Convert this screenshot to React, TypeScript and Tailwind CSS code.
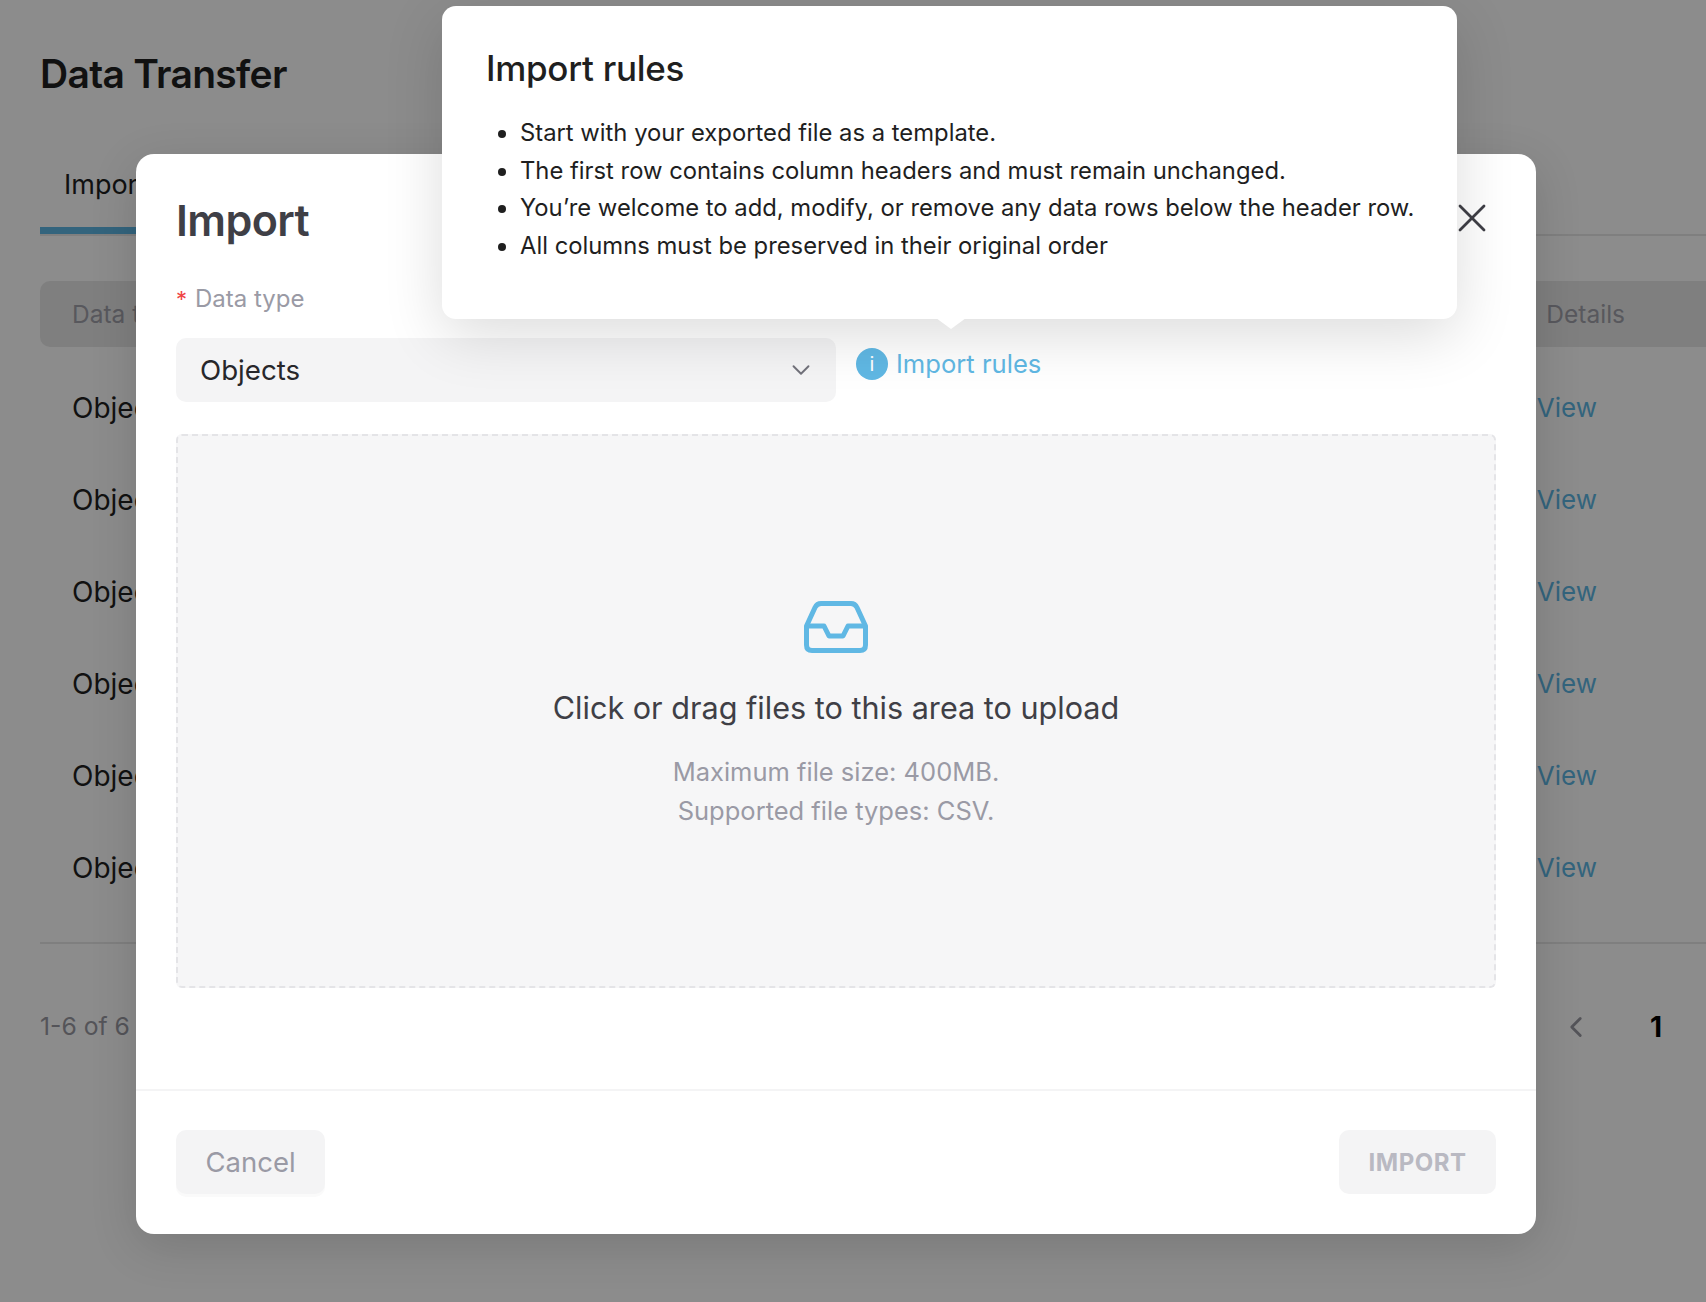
import { ChevronDown, ChevronLeft, X } from "lucide-react"

const rows = ["Objects", "Objects", "Objects", "Objects", "Objects", "Objects"]

const rules = [
  "Start with your exported file as a template.",
  "The first row contains column headers and must remain unchanged.",
  "You’re welcome to add, modify, or remove any data rows below the header row.",
  "All columns must be preserved in their original order",
]

const InboxIcon = () => (
  <svg width="64" height="52" viewBox="0 0 64 52" fill="none" stroke="#60b8e4" strokeWidth="5" strokeLinejoin="round">
    <path d="M2.5 25 L11 6.5 Q13 2.5 17 2.5 H47 Q51 2.5 53 6.5 L61.5 25 V44 Q61.5 49.5 56 49.5 H8 Q2.5 49.5 2.5 44 Z" />
    <path d="M2.5 25 H20 L25 35 H39 L44 25 H61.5" />
  </svg>
)

const Page = () => (
  <div className="pl-10 pt-[48px]">
    <h1 className="text-[39px] leading-[52px] font-semibold text-[#1f1f1f] tracking-[-0.7px]">Data Transfer</h1>
    <div className="mt-[50px] h-[86px] border-b-2 border-[#e8e8e8] flex">
      <div className="w-[200px] h-[84px] pl-6 pt-[17px] border-b-[7px] border-[#5db7e4] text-[27px] leading-[36px] text-[#1f1f1f]">Import</div>
    </div>
    <div className="mt-[45px] h-[66px] bg-[#e8e8e8] rounded-l-[10px] flex items-center justify-between pl-8 pr-[81px] text-[24.5px] text-[#a1a1aa]">
      <span>Data type</span>
      <span>Details</span>
    </div>
    <div className="h-[597px] border-b-2 border-[#e8e8e8] pt-[15px]">
      {rows.map((row, i) => (
        <div key={i} className="h-[92px] flex items-center justify-between pl-8 pr-[109px] text-[28px]">
          <span className="text-[#1f1f1f]">{row}</span>
          <span className="text-[#5db7e4] text-[26px] pb-[2px]">View</span>
        </div>
      ))}
    </div>
    <div className="mt-[63px] flex items-center justify-between pr-[44px] h-10">
      <span className="text-[24.7px] text-[#9a9aa3]">1-6 of 6</span>
      <div className="flex items-center gap-[57px]">
        <ChevronLeft size={34} strokeWidth={2} className="text-[#9a9aa3]" />
        <span className="text-[28px] font-bold text-black">1</span>
      </div>
    </div>
  </div>
)

const ImportModal = () => (
  <div className="absolute left-[136px] top-[154px] w-[1400px] h-[1080px] bg-white rounded-[18px] shadow-[0_12px_48px_rgba(0,0,0,0.14)] flex flex-col">
    <div className="flex-1 px-10 pt-10">
      <div className="flex items-center justify-between h-[52px]">
        <h2 className="text-[43px] font-semibold text-[#3f3f46] tracking-[-0.6px]">Import</h2>
        <X size={48} strokeWidth={1.4} className="text-[#3f3f46] -translate-y-0.5" />
      </div>
      <div className="mt-[38px] flex items-center gap-2 h-[30px] text-[24px] text-[#9a9aa5]">
        <span className="text-[#ef4444] text-[22px]">*</span>
        <span>Data type</span>
      </div>
      <div className="mt-[24px] flex items-center">
        <div className="w-[660px] h-[64px] bg-[#f4f4f5] rounded-[10px] flex items-center justify-between pl-6 pr-[20px] text-[27.7px] text-[#27272a]">
          <span className="pt-[1px]">Objects</span>
          <ChevronDown size={30} strokeWidth={1.5} className="text-[#71717a]" />
        </div>
        <div className="ml-5 flex items-center gap-2 -mt-[11px]">
          <span className="w-8 h-8 rounded-full bg-[#60b8e4] text-white text-[20px] flex items-center justify-center">i</span>
          <span className="text-[25.6px] text-[#60b8e4]">Import rules</span>
        </div>
      </div>
      <div className="mt-8 h-[554px] border-2 border-dashed border-[#e4e4e7] rounded-[6px] bg-[#f6f6f7] flex flex-col items-center justify-center pt-[9px]">
        <div className="-mt-[1px]">
          <InboxIcon />
        </div>
        <p className="mt-[35px] text-[30.6px] leading-[40px] text-[#3f3f46]">Click or drag files to this area to upload</p>
        <p className="mt-[24px] text-[25.5px] leading-[39px] text-[#9a9aa5] text-center">
          Maximum file size: 400MB.
          <br />
          Supported file types: CSV.
        </p>
      </div>
    </div>
    <div className="h-[145px] border-t-2 border-[#f4f4f5] px-10 pt-[39px] flex items-start justify-between">
      <button className="w-[149px] h-16 pt-[2px] rounded-[10px] bg-[#f4f4f5] shadow-[0_3px_0_#fafafa] text-[27.5px] text-[#9a9aa5]">Cancel</button>
      <button className="w-[157px] h-16 pt-[2px] rounded-[10px] bg-[#f4f4f5] text-[24px] font-bold tracking-[0.5px] text-[#b9b9c2]">IMPORT</button>
    </div>
  </div>
)

const RulesPopover = () => (
  <div className="absolute left-[442px] top-[6px] w-[1015px] h-[313px] bg-white rounded-[14px] shadow-[0_16px_60px_rgba(0,0,0,0.14)] pl-[44px] pt-[38px]">
    <h3 className="text-[35px] leading-[48px] font-medium text-[#1f1f1f] tracking-[-0.3px]">Import rules</h3>
    <ul className="mt-[22px] list-disc pl-[34px] text-[23.8px] leading-[37.7px] text-[#1f1f1f]">
      {rules.map((rule) => (
        <li key={rule}>{rule}</li>
      ))}
    </ul>
    <div className="absolute left-[494px] -bottom-[10px] w-0 h-0 border-x-[15px] border-x-transparent border-t-[11px] border-t-white" />
  </div>
)

const App = () => {
  return (
    <div className="relative w-[1706px] h-[1302px] overflow-hidden bg-white font-['Inter',sans-serif]">
      <Page />
      <div className="absolute inset-0 bg-black/45" />
      <ImportModal />
      <RulesPopover />
    </div>
  )
}

export default App
